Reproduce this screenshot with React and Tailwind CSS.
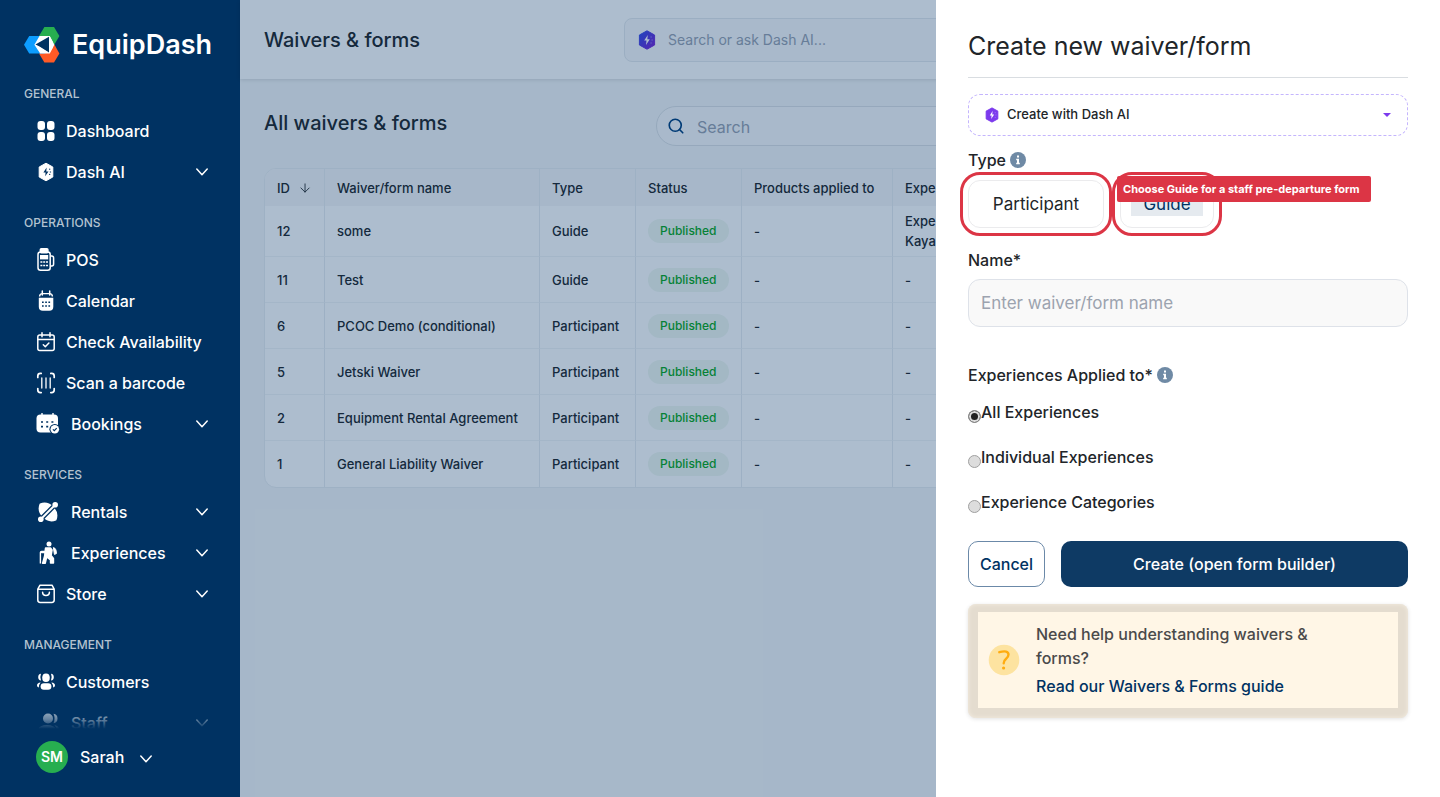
import { useState } from 'react';
import { Search, ArrowDown } from 'lucide-react';

const ICONS = {
  dashboard: (
    <svg viewBox="0 0 20 22" className="w-5 h-[22px]" fill="currentColor">
      <rect x="1.5" y="1" width="7.5" height="9" rx="3" />
      <rect x="11" y="1" width="7.5" height="9" rx="3" />
      <rect x="1.5" y="12" width="7.5" height="9" rx="3" />
      <rect x="11" y="12" width="7.5" height="9" rx="3" />
    </svg>
  ),
  ai: (
    <svg viewBox="0 0 20 22" className="w-5 h-[22px]">
      <path d="M10 2.2 16.8 6v10L10 19.8 3.2 16V6z" fill="currentColor" stroke="currentColor" strokeWidth="1" strokeLinejoin="round" />
      <path d="M10.6 6.6 7.4 11.4h2.2l-.4 3.9 3.3-4.9h-2.2z" fill="#003262" />
      <path d="M13 8.2h1.3M13.8 11h1.3M13 13.4h1.3" stroke="#003262" strokeWidth="1" />
    </svg>
  ),
  pos: (
    <svg viewBox="0 0 20 24" className="w-5 h-6" fill="none" stroke="currentColor" strokeWidth="1.5">
      <rect x="4.3" y=".8" width="7.6" height="4" rx="1" fill="currentColor" />
      <rect x="2" y="4" width="12.2" height="18.2" rx="2.5" />
      <rect x="4" y="7" width="8.2" height="4.4" fill="currentColor" stroke="none" />
      <path d="M14.4 8h1.4q1.8 0 1.8 2v6q0 2-1.8 2h-1.4" />
      <path d="M4.4 14h2M7.2 14h2M10 14h2M4.4 17.5h2M7.2 17.5h2M10 17.5h2" strokeWidth="1.3" />
    </svg>
  ),
  calendar: (
    <svg viewBox="0 0 20 22" className="w-5 h-[22px]">
      <path d="M2.8 7.8h14.5v9q0 4-4 4H6.8q-4 0-4-4z" fill="currentColor" />
      <path d="M3.6 6.6q0-3 3-3h6.8q3 0 3 3" fill="none" stroke="currentColor" strokeWidth="1.4" />
      <path d="M6.3 1v4M13.7 1v4" stroke="currentColor" strokeWidth="1.5" strokeLinecap="round" />
      <path d="M6 12.3h1.7M9.2 12.3h1.7M12.4 12.3h1.7M6 16h1.7M9.2 16h1.7M12.4 16h1.7" stroke="#003262" strokeWidth="1.5" />
    </svg>
  ),
  check: (
    <svg viewBox="0 0 20 22" className="w-5 h-[22px]" fill="none" stroke="currentColor" strokeWidth="1.5" strokeLinecap="round" strokeLinejoin="round">
      <rect x="1.8" y="4" width="16.4" height="15.6" rx="2" />
      <path d="M2 8.5h16M6 1.8v4M14 1.8v4M7.3 13.8l2 2 3.6-3.7" />
    </svg>
  ),
  barcode: (
    <svg viewBox="0 0 20 22" className="w-5 h-[22px]" fill="none" stroke="currentColor" strokeWidth="1.7" strokeLinecap="round">
      <path d="M1.8 5.4V4q0-2.6 2.6-2.6h.8M14.8 1.4h.8Q18.2 1.4 18.2 4v1.4M1.8 16.6V18q0 2.6 2.6 2.6h.8M14.8 20.6h.8q2.6 0 2.6-2.6v-1.4" />
      <path d="M5.8 6v10M10 6v10M14.2 6v10" strokeWidth="1.3" />
    </svg>
  ),
  bookings: (
    <svg viewBox="0 0 25 22" className="w-[25px] h-[22px]">
      <rect x=".5" y="1.5" width="21.5" height="18" rx="4" fill="currentColor" />
      <path d="M6 0v3M17 0v3" stroke="currentColor" strokeWidth="1.4" />
      <path d="M5 9h2M10.2 9h2M15.4 9h2M5 13.6h2M10.2 13.6h2" stroke="#003262" strokeWidth="1.7" />
      <circle cx="18.8" cy="16.3" r="5.4" fill="#003262" />
      <circle cx="18.8" cy="16.3" r="4.3" fill="currentColor" />
      <path d="m16.900 16.400 1.400 1.300 2.400-2.500" fill="none" stroke="#003262" strokeWidth="1.2" />
    </svg>
  ),
  rentals: (
    <svg viewBox="0 0 25 22" className="w-[25px] h-[22px]">
      <g transform="rotate(45 12 11)">
        <path d="M1 11q3-6.800 11-6.800T23 11q-3 6.800-11 6.800T1 11z" fill="currentColor" stroke="currentColor" strokeWidth="1.5" strokeLinejoin="round" />
      </g>
      <path d="M4.5 18.5 19.5 3.5" stroke="#003262" strokeWidth="4.6" />
      <path d="M5 18 19 4" stroke="currentColor" strokeWidth="2" />
      <circle cx="4.8" cy="18.2" r="2.8" fill="currentColor" />
      <circle cx="19.2" cy="3.8" r="2.8" fill="currentColor" />
    </svg>
  ),
  experiences: (
    <svg viewBox="0 0 25 24" className="w-[25px] h-6" fill="currentColor" stroke="currentColor" strokeLinejoin="round">
      <circle cx="13" cy="3" r="2.5" stroke="none" />
      <path d="M9.500 7h5l1.600 2-1 5.500 2.400 3v4.600h-3V19l-3.800-3-1.400 6.200H6.600l2-7.200.4-3.400H5.600v-1H9z" strokeWidth="1.4" />
      <path d="M17.400 6.600q3 .6 3 6l-2 .8z" strokeWidth="1" />
      <path d="M4.400 22.600V11.500q0-1.100 1.200-1.100h3" fill="none" strokeWidth="1.4" />
    </svg>
  ),
  store: (
    <svg viewBox="0 0 20 22" className="w-5 h-[22px]" fill="none" stroke="currentColor" strokeWidth="1.5" strokeLinecap="round" strokeLinejoin="round">
      <path d="M1.800 6.200 4 2.200h12l2.200 4V17q0 2.400-2.400 2.400H4.200Q1.800 19.400 1.800 17zM2 6.200h16" />
      <path d="M6.600 9.200q0 3.200 3.400 3.200t3.400-3.200" />
    </svg>
  ),
  customers: (
    <svg viewBox="0 0 20 22" className="w-5 h-[22px]" fill="currentColor">
      <ellipse cx="10" cy="6.8" rx="3.8" ry="4.3" />
      <path d="M5 2.800q-2.800.4-2.800 3.400T5 9.600Q3.600 6.200 5 2.800zM15 2.800q2.800.4 2.800 3.400T15 9.600q1.400-3.400 0-6.800z" />
      <rect x="4.6" y="12.2" width="10.8" height="6.6" rx="3.3" />
      <path d="M4.600 11.600Q1 12 1 14.600q0 1.600 1.800 1.800.2-3 1.800-4.800zM15.400 11.600Q19 12 19 14.600q0 1.600-1.800 1.800-.2-3-1.800-4.800z" />
    </svg>
  ),
  staff: (
    <svg viewBox="0 0 25 22" className="w-[25px] h-[22px]" fill="currentColor">
      <circle cx="12" cy="6.5" r="5" />
      <path d="M17.500 1.800q4 .4 4 4.700t-4 4.700q2.200-4.700 0-9.400z" />
      <ellipse cx="11" cy="17" rx="8.5" ry="4" />
      <path d="M18.500 13.200q4.300.8 4.300 3.300 0 1.600-3 2.600 1.400-3.200-1.300-5.900z" />
    </svg>
  ),
};

const NAV = [
  { title: 'GENERAL', items: [
    { icon: 'dashboard', label: 'Dashboard' },
    { icon: 'ai', label: 'Dash AI', more: true },
  ] },
  { title: 'OPERATIONS', items: [
    { icon: 'pos', label: 'POS' },
    { icon: 'calendar', label: 'Calendar' },
    { icon: 'check', label: 'Check Availability' },
    { icon: 'barcode', label: 'Scan a barcode' },
    { icon: 'bookings', label: 'Bookings', more: true },
  ] },
  { title: 'SERVICES', items: [
    { icon: 'rentals', label: 'Rentals', more: true },
    { icon: 'experiences', label: 'Experiences', more: true },
    { icon: 'store', label: 'Store', more: true },
  ] },
  { title: 'MANAGEMENT', items: [
    { icon: 'customers', label: 'Customers' },
    { icon: 'staff', label: 'Staff', more: true },
  ] },
];

const COLUMNS = ['ID', 'Waiver/form name', 'Type', 'Status', 'Products applied to', 'Experiences applied to'];

const WAIVERS = [
  { id: 12, name: 'some', type: 'Guide', experiences: ['Experience demo,', 'Kayak tour'] },
  { id: 11, name: 'Test', type: 'Guide' },
  { id: 6, name: 'PCOC Demo (conditional)', type: 'Participant' },
  { id: 5, name: 'Jetski Waiver', type: 'Participant' },
  { id: 2, name: 'Equipment Rental Agreement', type: 'Participant' },
  { id: 1, name: 'General Liability Waiver', type: 'Participant' },
];

const SCOPES = ['All Experiences', 'Individual Experiences', 'Experience Categories'];

function Logo() {
  return (
    <svg viewBox="0 0 36 36" className="w-9 h-9 shrink-0" aria-hidden="true">
      <path d="M20.400 0h9.600l5.400 9-5 8.600h-10L15 9z" fill="#27ae50" />
      <path d="M20.400 17.600h10l5 9L30 35.600h-9.600L15 26.400z" fill="#ff5a26" />
      <path d="M5.200 9h15.400l5 8.800-5 8.800H5.200L0 17.800z" fill="#0d9dff" />
      <path d="M15.500 9h10.300l4.600 8.800-4.600 8.800h-9.600L10.400 17.800z" fill="#fff" />
      <path d="M11.400 17.400 25 9.800v15.600L15.500 19.400z" fill="#003262" />
      <path d="M11.400 17.800 25 25.800l-9-3z" fill="#fff" />
      <path d="M25.800 9.600l3 5.400v5.600l-3 5z" fill="#fff" />
    </svg>
  );
}

function Chevron({ className }) {
  return (
    <svg viewBox="0 0 12 8" className={className} fill="none" stroke="currentColor" strokeWidth="1.5" strokeLinecap="round" strokeLinejoin="round" aria-hidden="true">
      <path d="m.8 1 5.200 5.800L11.200 1" />
    </svg>
  );
}

function DashAiIcon({ className, gradient }) {
  return (
    <svg viewBox="0 0 18 20" className={className} aria-hidden="true">
      <defs>
        <linearGradient id="dash-ai" x1="0" y1="0" x2="1" y2="1">
          <stop offset="0" stopColor="#2f4fe8" />
          <stop offset="1" stopColor="#7f1fd4" />
        </linearGradient>
      </defs>
      <path d="M9 .8 16.600 5v10L9 19.200 1.400 15V5z" fill={gradient ? 'url(#dash-ai)' : '#7c3aed'} stroke={gradient ? 'url(#dash-ai)' : '#7c3aed'} strokeLinejoin="round" />
      <path d="M9.800 5 6.200 10.600h2.300L8 15l3.800-5.800H9.300z" fill="#fff" />
      <path d="M12.600 7h1M13.600 10h1M12.600 13h1" stroke="#fff" strokeOpacity=".5" />
    </svg>
  );
}

function InfoIcon() {
  return (
    <svg viewBox="0 0 16 16" className="w-4 h-4" aria-hidden="true">
      <circle cx="8" cy="8" r="8" fill="#6f8aa5" />
      <path d="M7 3.500h2v2H7zM6.200 6.800H9v4h.8v1.500H6.200v-1.500H7V8.300h-.8z" fill="#fff" />
    </svg>
  );
}

function NavItem({ icon, label, more }) {
  return (
    <a href="#" className="flex items-center h-[41px] pl-9 pr-8 text-white">
      {ICONS[icon]}
      <span className="ml-[10px] text-base leading-4 font-medium">{label}</span>
      {more && <Chevron className="ml-auto w-3 h-2" />}
    </a>
  );
}

function Sidebar() {
  return (
    <aside className="w-60 shrink-0 flex flex-col bg-[#003262] text-white">
      <div className="flex items-center gap-3 h-[85px] pl-6 pt-1 shrink-0">
        <Logo />
        <span className="text-[27px] leading-8 font-semibold">EquipDash</span>
      </div>
      <div className="relative flex-1 min-h-0 overflow-hidden">
        <nav className="flex flex-col gap-[22px]">
          {NAV.map(group => (
            <div key={group.title}>
              <h2 className="mb-2 pl-6 text-[12px] leading-[17px] font-medium text-[#b3c2d0]">{group.title}</h2>
              {group.items.map(item => <NavItem key={item.label} {...item} />)}
            </div>
          ))}
        </nav>
        <div className="absolute inset-x-0 bottom-0 h-8 bg-linear-to-t from-[#003262] from-10% via-[#003262]/60 via-40% to-[#003262]/10" />
      </div>
      <button type="button" className="flex items-center shrink-0 pt-[9px] pb-6 pl-9">
        <span className="grid place-items-center w-8 h-8 rounded-full bg-[#27ae50] text-sm font-semibold">SM</span>
        <span className="ml-3 text-base font-medium">Sarah</span>
        <Chevron className="ml-4 mt-1 w-3 h-2" />
      </button>
    </aside>
  );
}

function WaiverTable() {
  return (
    <table className="w-full table-fixed border-separate border-spacing-0 rounded-xl border border-[#e9edf0] overflow-hidden bg-white text-[13px] leading-5 font-medium text-[#212529]">
      <colgroup>
        <col className="w-[60px]" />
        <col className="w-[215px]" />
        <col className="w-[96px]" />
        <col className="w-[106px]" />
        <col className="w-[151px]" />
        <col />
      </colgroup>
      <thead>
        <tr className="bg-[#f7f7f8]">
          {COLUMNS.map(col => (
            <th key={col} className="h-[37px] px-3 text-left font-medium whitespace-nowrap border-r border-[#e9edf0] last:border-r-0">
              <span className="flex items-center gap-2">
                {col}
                {col === 'ID' && <ArrowDown className="w-4 h-4" strokeWidth={1.5} />}
              </span>
            </th>
          ))}
        </tr>
      </thead>
      <tbody>
        {WAIVERS.map(row => (
          <tr key={row.id} className="[&>td]:h-[46px] [&>td]:px-3 [&>td]:py-[5px] [&>td]:border-r [&>td]:border-b [&>td]:border-r-[#e8ecf0] [&>td]:border-b-[#f2f5f7] last:[&>td]:border-b-0 [&>td:last-child]:border-r-0">
            <td>{row.id}</td>
            <td>{row.name}</td>
            <td>{row.type}</td>
            <td>
              <span className="inline-block px-3 rounded-full bg-[#f0f8f1] text-[12px] leading-6 text-[#0aa820]">Published</span>
            </td>
            <td>-</td>
            <td>{row.experiences ? row.experiences.map(e => <div key={e}>{e}</div>) : '-'}</td>
          </tr>
        ))}
      </tbody>
    </table>
  );
}

function CreateDrawer() {
  const [type, setType] = useState('Participant');
  const [scope, setScope] = useState(SCOPES[0]);

  return (
    <section aria-label="Create new waiver/form" className="absolute inset-y-0 right-0 w-[504px] px-8 pt-[30px] bg-white text-base text-[#212529]">
      <h2 className="pb-[15px] border-b border-[#d9dde1] text-[25px] leading-8">Create new waiver/form</h2>

      <button type="button" className="flex items-center w-full h-[42px] mt-4 px-4 rounded-xl border border-dashed border-[#c4b5fd] text-[13px] font-medium">
        <DashAiIcon className="w-[14px] h-4" />
        <span className="ml-2">Create with Dash AI</span>
        <span className="ml-auto border-x-4 border-t-4 border-x-transparent border-t-[#7c3aed]" />
      </button>

      <div className="flex items-center gap-1 mt-3 mb-2 font-medium">Type <InfoIcon /></div>
      <div className="relative flex gap-4">
        <button type="button" onClick={() => setType('Participant')} aria-pressed={type === 'Participant'}
          className="h-12 w-[136px] pt-0.5 rounded-xl border border-[#ebebed] text-[17px] outline-[3px] outline-offset-[5px] outline-[#dc3545]">
          Participant
        </button>
        <button type="button" onClick={() => setType('Guide')} aria-pressed={type === 'Guide'}
          className="h-12 w-[94px] pt-0.5 rounded-xl border border-[#ebebed] text-[17px] text-[#003262] outline-[3px] outline-offset-[5px] outline-[#dc3545]">
          <span className="bg-[#e5eaef] px-3 py-0.5">Guide</span>
        </button>
        <div role="tooltip" className="absolute -top-1 left-[149px] pl-1.5 pr-[11px] rounded-xs bg-[#dc3545] text-[11px] leading-[26px] font-bold text-white whitespace-nowrap">
          Choose Guide for a staff pre-departure form
        </div>
      </div>

      <label htmlFor="waiver-name" className="block mt-5 mb-[7px] font-medium">Name*</label>
      <input id="waiver-name" type="text" placeholder="Enter waiver/form name"
        className="block w-full h-12 px-3 rounded-xl border border-[#dee2e9] bg-[#f9f9f9] text-[17px] placeholder:text-[#9ca3af]" />

      <fieldset className="mt-9 font-medium">
        <legend className="flex items-center gap-1">Experiences Applied to* <InfoIcon /></legend>
        <div className="flex flex-col gap-[21px] mt-[13px]">
          {SCOPES.map(s => (
            <label key={s} className="flex items-center">
              <input type="radio" name="scope" checked={scope === s} onChange={() => setScope(s)}
                className="appearance-none mt-2 w-[13px] h-[13px] rounded-full border border-[#a0a0a0] bg-[#dddddd] checked:border-[#8a8a8a] checked:bg-[#222222] checked:shadow-[inset_0_0_0_2px_#dddddd]" />
              {s}
            </label>
          ))}
        </div>
      </fieldset>

      <div className="flex gap-4 mt-[27px]">
        <button type="button" className="h-[46px] w-[77px] rounded-[10px] border border-[#6b89a8] text-[#003262] font-medium">Cancel</button>
        <button type="button" className="flex-1 h-[46px] rounded-[10px] bg-[#0e3a64] text-white font-medium">Create (open form builder)</button>
      </div>

      <div className="mt-[17px] px-[10px] pt-2 pb-[10px] rounded-lg bg-[#e4dccf] shadow-[inset_0_0_4px_#f5eee2,0_1px_4px_rgba(0,0,0,0.12)]">
        <div className="flex items-center p-[10px] bg-[#fff6e6]">
          <svg viewBox="0 0 32 32" className="w-8 h-8 shrink-0" aria-hidden="true">
            <circle cx="16" cy="16" r="15.300" fill="#fde3a0" />
            <path d="M11.300 8.200q9-2.400 9.200 2.400 0 2.400-2.600 4.400-2.200 1.800-2.200 4.200" fill="none" stroke="#ffac10" strokeWidth="2.400" strokeLinecap="round" />
            <circle cx="15.600" cy="24" r="1.600" fill="#ffac10" />
          </svg>
          <div className="ml-4 pr-10 font-medium">
            <p className="text-[#4a4a4a]">Need help understanding waivers & forms?</p>
            <a href="#" className="block mt-1 text-[#003262]">Read our Waivers & Forms guide</a>
          </div>
        </div>
      </div>
    </section>
  );
}

export default function App() {
  return (
    <div className="relative flex h-screen overflow-hidden font-[Inter,sans-serif]">
      <Sidebar />
      <main className="relative flex-1 min-w-0 bg-[#f5f7f8] text-[#212529]">
        <header className="relative grid grid-cols-[1fr_432px_1fr] items-center h-[79px] px-6 bg-white shadow-[0_1px_4px_rgba(0,0,0,0.12)]">
          <h1 className="text-xl font-medium">Waivers & forms</h1>
          <label className="flex items-center gap-3 h-11 px-[13px] rounded-lg border border-[#e5e9ed] bg-[#f9fafb]">
            <DashAiIcon className="w-[18px] h-5" gradient />
            <input type="text" aria-label="Search or ask Dash AI" placeholder="Search or ask Dash AI..." className="flex-1 min-w-0 text-sm outline-none placeholder:text-[#98a1b0]" />
          </label>
        </header>
        <div className="px-6 pt-[27px]">
          <div className="flex items-center justify-between mb-[22px]">
            <h2 className="pb-1.5 text-xl font-medium">All waivers & forms</h2>
            <label className="flex items-center gap-3 h-10 w-[760px] px-[10px] rounded-full border border-[#dde1e5] bg-[#f9fafb]">
              <Search className="w-[18px] h-[18px] text-[#003f7d]" strokeWidth={2.2} />
              <input type="text" aria-label="Search" placeholder="Search" className="flex-1 min-w-0 pt-0.5 text-base outline-none placeholder:text-[#98a1b0]" />
            </label>
          </div>
          <WaiverTable />
        </div>
        <div className="absolute inset-0 bg-[#003366]/32" />
      </main>
      <CreateDrawer />
    </div>
  );
}
